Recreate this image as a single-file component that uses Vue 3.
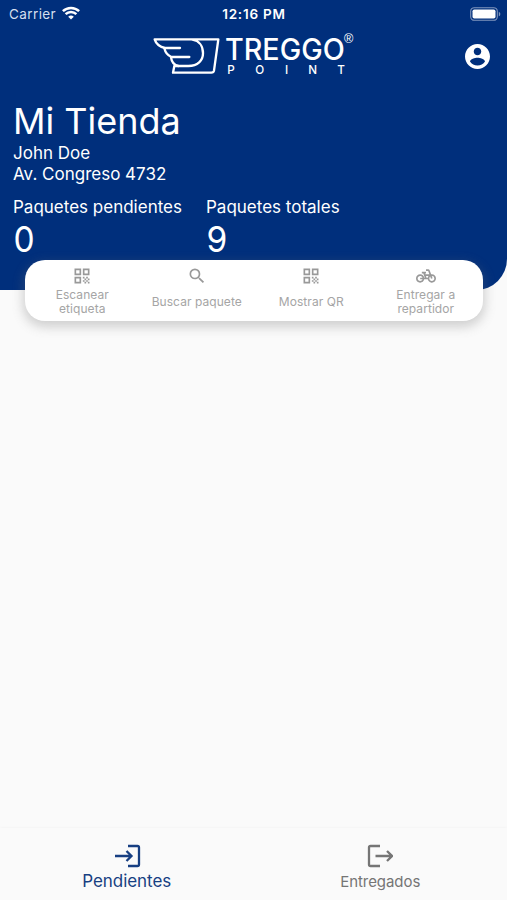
<script setup>
const actions = [
  { icon: 'qr', lines: ['Escanear', 'etiqueta'] },
  { icon: 'search', lines: ['Buscar paquete'] },
  { icon: 'qr', lines: ['Mostrar QR'] },
  { icon: 'bike', lines: ['Entregar a', 'repartidor'] },
]
</script>

<template>
  <div class="screen">
    <header class="hero">
      <div class="status">
        <div class="carrier">
          <span>Carrier</span>
          <svg class="wifi" viewBox="0 0 18 14">
            <path d="M9 13.6 6.2 10.7a4.1 4.1 0 0 1 5.6 0z" fill="#fff" />
            <path d="M3.6 8.2a7.8 7.8 0 0 1 10.8 0M.9 5.2a11.6 11.6 0 0 1 16.2 0" fill="none" stroke="#fff" stroke-width="2.5" />
          </svg>
        </div>
        <div class="time">12:16 PM</div>
        <svg class="battery" viewBox="0 0 31 14">
          <rect x=".7" y=".7" width="26.6" height="12.6" rx="3.6" fill="none" stroke="#8096bd" stroke-width="1.1" />
          <rect x="2.5" y="2.5" width="23" height="9" rx="1.8" fill="#fff" />
          <path d="M28.8 4.7c2 .8 2 3.8 0 4.6z" fill="#8096bd" />
        </svg>
      </div>

      <div class="brand">
        <svg class="logo" viewBox="0 0 660 162" role="img" aria-label="Treggo Point">
          <g fill="none" stroke="#fff" stroke-width="7" stroke-linejoin="round" stroke-linecap="round">
            <path d="M105 60H60C43 56 33 47 29 34H220L207 128Q206 134 199 134H84L88 114H130C158 114 174 98 174 76C174 54 162 38 142 35" />
            <path d="M58 61C61 74 67 82 79 87H133M78 88C80 102 86 111 100 114" />
          </g>
          <g fill="#fff" font-family="Inter, sans-serif">
            <text x="240" y="97" font-size="88" font-weight="500" textLength="359" lengthAdjust="spacingAndGlyphs">TREGGO</text>
            <text x="597" y="45" font-family="'Liberation Sans', sans-serif" font-size="38">®</text>
            <g font-size="35" font-weight="500" text-anchor="middle">
              <text x="258" y="137">P</text>
              <text x="344" y="137">O</text>
              <text x="425" y="137">I</text>
              <text x="503" y="137">N</text>
              <text x="588" y="137">T</text>
            </g>
          </g>
        </svg>
        <svg class="account" viewBox="2 2 20 20">
          <path fill="#fff" d="M12 2C6.48 2 2 6.48 2 12s4.48 10 10 10 10-4.48 10-10S17.52 2 12 2zm0 3c1.66 0 3 1.34 3 3s-1.34 3-3 3-3-1.34-3-3 1.34-3 3-3zm0 14.2c-2.5 0-4.71-1.28-6-3.22.03-1.99 4-3.08 6-3.08 1.99 0 5.97 1.09 6 3.08-1.29 1.94-3.5 3.22-6 3.22z" />
        </svg>
      </div>

      <div class="store">
        <h1>Mi Tienda</h1>
        <p>John Doe</p>
        <p class="address">Av. Congreso 4732</p>
      </div>

      <div class="stats">
        <div class="stat pending"><span>Paquetes pendientes</span><strong>0</strong></div>
        <div class="stat total"><span>Paquetes totales</span><strong>9</strong></div>
      </div>
    </header>

    <section class="actions">
      <div v-for="(a, i) in actions" :key="i" class="action">
        <svg v-if="a.icon === 'qr'" class="icon" viewBox="0 0 24 24">
          <path d="M3 11h8V3H3v8zm2-6h4v4H5V5zM3 21h8v-8H3v8zm2-6h4v4H5v-4zM13 3v8h8V3h-8zm6 6h-4V5h4v4zM19 19h2v2h-2zM13 13h2v2h-2zM15 15h2v2h-2zM13 17h2v2h-2zM15 19h2v2h-2zM17 17h2v2h-2zM17 13h2v2h-2zM19 15h2v2h-2z" />
        </svg>
        <svg v-else-if="a.icon === 'search'" class="icon" viewBox="0 0 24 24">
          <path d="M15.5 14h-.79l-.28-.27A6.471 6.471 0 0 0 16 9.5 6.5 6.5 0 1 0 9.5 16c1.61 0 3.09-.59 4.23-1.57l.27.28v.79l5 4.99L20.49 19l-4.99-5zm-6 0C7.01 14 5 11.99 5 9.5S7.01 5 9.5 5 14 7.01 14 9.5 11.99 14 9.5 14z" />
        </svg>
        <svg v-else class="icon" viewBox="0 0 24 24">
          <path d="M19 10h-.82l-1.7-4.68A2.008 2.008 0 0 0 14.6 4H12v2h2.6l1.46 4h-4.81l-.36-1H12V7H7v2h1.75l1.82 5H9.9c-.44-2.23-2.31-3.88-4.65-3.99C2.45 9.87 0 12.2 0 15s2.2 5 5 5c2.46 0 4.45-1.69 4.9-4h4.2c.44 2.23 2.31 3.88 4.65 3.99 2.8.13 5.25-2.19 5.25-5C24 12.2 21.8 10 19 10zM7.82 16c-.4 1.17-1.49 2-2.82 2-1.68 0-3-1.32-3-3s1.32-3 3-3c1.33 0 2.42.83 2.82 2H5v2h2.82zm6.28-2h-1.4l-.73-2H15c-.44.58-.76 1.25-.9 2zm4.9 4c-1.68 0-3-1.32-3-3 0-.93.41-1.73 1.05-2.28l.96 2.64 1.88-.68-.97-2.67A3 3 0 0 1 22 15c0 1.68-1.32 3-3 3z" />
        </svg>
        <div class="label"><span v-for="l in a.lines" :key="l">{{ l }}</span></div>
      </div>
    </section>

    <main class="content"></main>

    <nav class="tabs">
      <div class="tab active">
        <svg viewBox="0 0 26 24"><path d="M13 2H22.5Q24 2 24 3.5V20.5Q24 22 22.5 22H13M0 12H16M11.5 7L16.5 12L11.5 17" /></svg>
        <span>Pendientes</span>
      </div>
      <div class="tab">
        <svg viewBox="0 0 26 24"><path d="M13 2H3.5Q2 2 2 3.5V20.5Q2 22 3.5 22H13M8.5 12H25M20 7L25 12L20 17" /></svg>
        <span>Entregados</span>
      </div>
    </nav>
  </div>
</template>

<style>
body { background: #fafafa; }
</style>

<style scoped>
.screen { width: 507px; height: 900px; display: flex; flex-direction: column; background: #fafafa; font-family: Inter, sans-serif; overflow: hidden; }
.hero { height: 290px; flex: none; box-sizing: border-box; background: #002f7c; color: #fff; border-bottom-right-radius: 31px; }
.status { height: 28px; display: grid; grid-template-columns: 1fr auto 1fr; align-items: center; padding: 0 6px 0 7px; font-size: 13.5px; box-sizing: border-box; }
.carrier { display: flex; align-items: center; gap: 6px; padding-left: 2px; color: #d5dfee; letter-spacing: .4px; }
.wifi { width: 18px; height: 14px; margin-top: -2px; }
.time { font-weight: 600; font-size: 13.5px; letter-spacing: .8px; margin-top: -1px; }
.battery { width: 31px; height: 14px; justify-self: end; margin-top: -1px; }
.brand { height: 54px; display: flex; align-items: center; justify-content: space-between; padding: 0 17px 0 145px; }
.logo { width: 220px; height: 54px; }
.account { width: 25px; height: 25px; margin-top: 2px; }
.store { padding: 18px 13px 0; }
h1, p { margin: 0; font-weight: 400; white-space: nowrap; }
h1 { font-size: 36px; line-height: 43px; letter-spacing: 0; }
p { font-size: 17px; line-height: 21px; letter-spacing: 0; }
.stats { display: flex; padding: 11px 13px 0; }
.stat { display: flex; flex-direction: column; white-space: nowrap; }
.pending { width: 193px; }
.stat span { font-size: 17px; line-height: 22px; letter-spacing: 0; }
.stat strong { font-size: 36px; line-height: 42px; font-weight: 400; transform: scaleX(.93); transform-origin: 8px 50%; }
.actions { height: 61px; flex: none; margin: -30px 24px 0 25px; border-radius: 20px; background: #fff; box-shadow: 0 4px 11px 2px rgba(110, 110, 110, .3); display: grid; grid-template-columns: repeat(4, 1fr); position: relative; }
.action { display: flex; flex-direction: column; align-items: center; padding-top: 6px; color: #a5a5a5; }
.icon { width: 20px; height: 20px; flex: none; fill: #999; }
.label { height: 32px; display: flex; flex-direction: column; justify-content: center; text-align: center; font-size: 12px; line-height: 14.5px; letter-spacing: .06px; white-space: nowrap; }
.content { flex: 1; }
.tabs { height: 72px; flex: none; display: grid; grid-template-columns: 1fr 1fr; box-shadow: 0 -1px 2px rgba(0, 0, 0, .025); }
.tab { display: flex; flex-direction: column; align-items: center; padding-top: 16px; color: #757575; font-size: 15px; letter-spacing: -.05px; }
.tab svg { width: 26px; height: 24px; fill: none; stroke: currentColor; stroke-width: 2.3; stroke-linecap: butt; }
.tab span { line-height: 20px; margin-top: 4px; }
.active { color: #173f82; font-size: 17px; }
.active svg { margin-left: 2px; }
.active span { margin-top: 3px; }
</style>
